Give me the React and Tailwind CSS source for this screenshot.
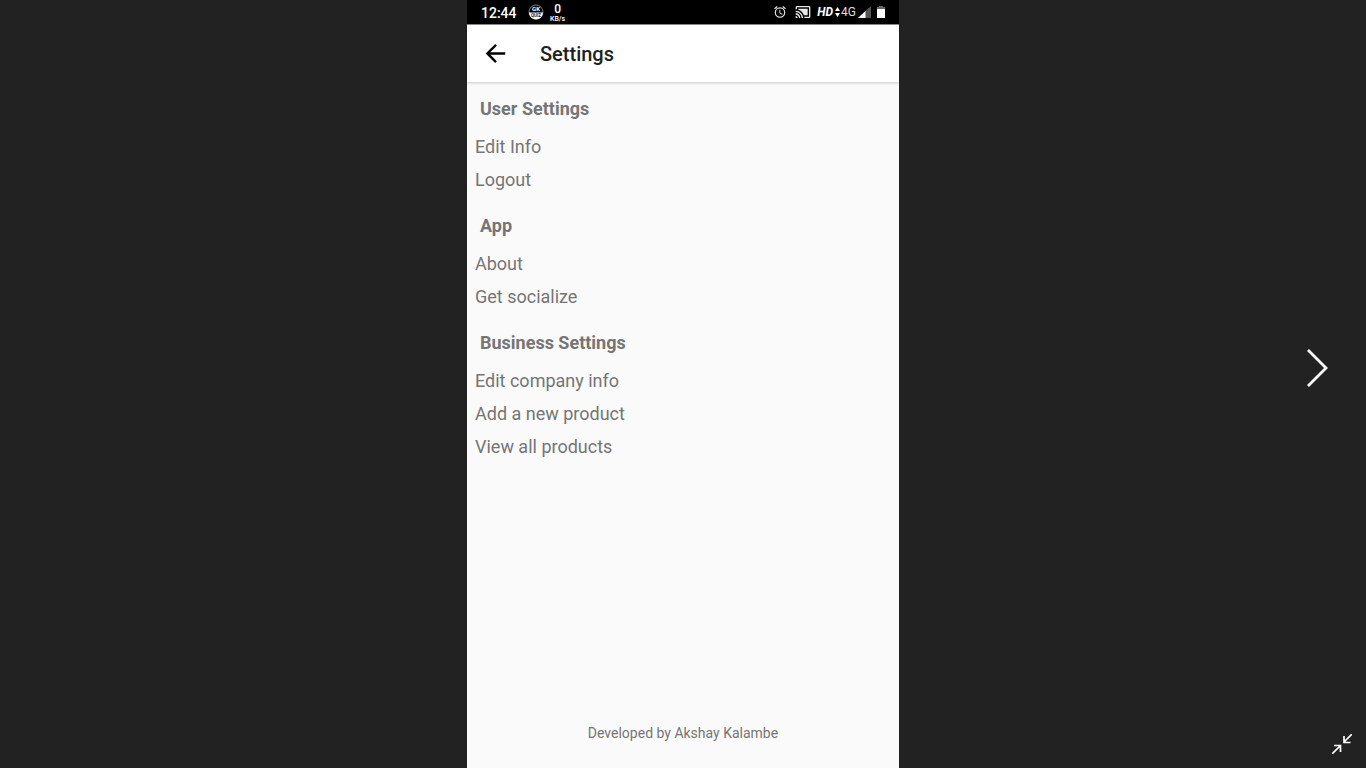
const sections = [
  { title: "User Settings", items: ["Edit Info", "Logout"] },
  { title: "App", items: ["About", "Get socialize"] },
  {
    title: "Business Settings",
    items: ["Edit company info", "Add a new product", "View all products"],
  },
];

function StatusBar() {
  return (
    <div className="flex h-6 shrink-0 items-center justify-between bg-black pl-3.5 pr-3 text-white">
      <div className="flex items-center">
        <span className="w-[47px] pt-0.5 text-sm font-medium leading-5">12:44</span>
        <svg width="16" height="16" viewBox="0 0 16 16" aria-hidden="true">
          <circle cx="8" cy="8" r="7" fill="#000" stroke="#999" strokeWidth="0.8" />
          <path d="M1 8.5h14a7 7 0 0 1-14 0z" fill="#fff" />
          <text x="8" y="7.2" textAnchor="middle" fontSize="6" fontWeight="700" fill="#fff">GK</text>
          <text x="8" y="12.8" textAnchor="middle" fontSize="4.5" fontWeight="700" fill="#222">QUIZ</text>
        </svg>
        <div className="ml-1.5 flex flex-col items-center pt-0.5 font-medium">
          <span className="text-xs leading-[11px]">0</span>
          <span className="text-[7px] leading-[8px]">KB/s</span>
        </div>
      </div>
      <div className="flex items-center">
        <svg width="14" height="14" viewBox="0 0 24 24" fill="#e8e8e8" aria-hidden="true">
          <path d="M22 5.72l-4.6-3.86-1.29 1.53 4.6 3.86L22 5.72zM7.88 3.39L6.6 1.86 2 5.71l1.29 1.53 4.59-3.85zM12.5 8H11v6l4.75 2.85.75-1.23-4-2.37V8zM12 4a9 9 0 1 0 0 18 9 9 0 0 0 0-18zm0 16a7 7 0 1 1 0-14 7 7 0 0 1 0 14z" />
        </svg>
        <svg className="ml-2" width="16" height="16" viewBox="0 0 24 24" fill="#e8e8e8" aria-hidden="true">
          <path d="M1 18v3h3c0-1.66-1.34-3-3-3zm0-4v2c2.76 0 5 2.24 5 5h2c0-3.87-3.13-7-7-7zm18-7H5v1.63c3.96 1.28 7.09 4.41 8.37 8.37H19V7zM1 10v2a9 9 0 0 1 9 9h2c0-6.08-4.93-11-11-11zm20-7H3c-1.1 0-2 .9-2 2v3h2V5h18v14h-7v2h7c1.1 0 2-.9 2-2V5c0-1.1-.9-2-2-2z" />
        </svg>
        <span className="ml-1.5 text-xs font-bold italic leading-4">HD</span>
        <svg className="ml-0.5" width="5" height="10" viewBox="0 0 5 10" fill="#fff" aria-hidden="true">
          <path d="M0 4l2.500-4 2.500 4zM0 6h5l-2.500 4z" />
        </svg>
        <span className="ml-px text-xs leading-4 text-[#dddddd]">4G</span>
        <svg className="ml-0.5" width="13" height="12" viewBox="0 0 13 12" aria-hidden="true">
          <path d="M0 12L13 0v12z" fill="#555" />
          <path d="M0 12l7.5-7v7z" fill="#fff" />
        </svg>
        <svg className="ml-1.5 mr-0.5" width="8" height="12" viewBox="0 0 8 12" aria-hidden="true">
          <path d="M0 1h2V0h4v1h2v3H0z" fill="#666" />
          <path d="M0 3h8v9H0z" fill="#fff" />
        </svg>
      </div>
    </div>
  );
}

export default function App() {
  return (
    <div className="flex min-h-screen justify-center bg-[#222222] font-['Roboto',sans-serif]">
      <div className="flex flex-1" />

      <main className="flex aspect-[9/16] min-h-screen flex-col bg-[#fafafa]">
        <StatusBar />
        <header className="flex h-[58px] shrink-0 items-center border-t border-[#888888] bg-white pl-4 shadow-[0_1px_3px_rgba(0,0,0,0.2)]">
          <button type="button" aria-label="Back" className="flex size-[26px] items-center justify-center">
            <svg width="26" height="26" viewBox="0 0 24 24" fill="none" stroke="#000" strokeWidth="2.2" aria-hidden="true">
              <path d="M20.500 11.500H4M12 3.500l-8 8 8 8" />
            </svg>
          </button>
          <h1 className="ml-[31px] text-xl font-medium text-[#212121]">Settings</h1>
        </header>

        <div className="flex flex-1 flex-col gap-[13px] px-2 pt-2.5">
          {sections.map((section) => (
            <section key={section.title}>
              <h2 className="mb-[5px] pl-[5px] text-lg font-bold leading-[33px] text-[#757575]">
                {section.title}
              </h2>
              <ul>
                {section.items.map((item) => (
                  <li key={item}>
                    <button type="button" className="block w-full text-left text-lg leading-[33px] text-[#757575]">
                      {item}
                    </button>
                  </li>
                ))}
              </ul>
            </section>
          ))}
        </div>

        <footer className="pb-[25px] text-center text-sm text-[#757575]">
          Developed by Akshay Kalambe
        </footer>
      </main>

      <div className="flex flex-1 flex-col items-end">
        <div className="flex flex-1 items-center pr-[38px] pt-8">
          <button type="button" aria-label="Next">
            <svg width="22" height="40" viewBox="0 0 22 40" fill="none" stroke="#fff" strokeWidth="2.8" aria-hidden="true">
              <path d="M2 2l18 18L2 38" />
            </svg>
          </button>
        </div>
        <div className="flex h-16 shrink-0 items-end pb-3.5 pr-3.5">
          <button type="button" aria-label="Exit full screen">
            <svg width="20" height="20" viewBox="0 0 20 20" fill="none" stroke="#fff" strokeWidth="1.7" aria-hidden="true">
              <path d="M20 0l-8 8M12 2v6.500h6.500M0 20l8-8M2 11.500h6.500V18" />
            </svg>
          </button>
        </div>
      </div>
    </div>
  );
}
